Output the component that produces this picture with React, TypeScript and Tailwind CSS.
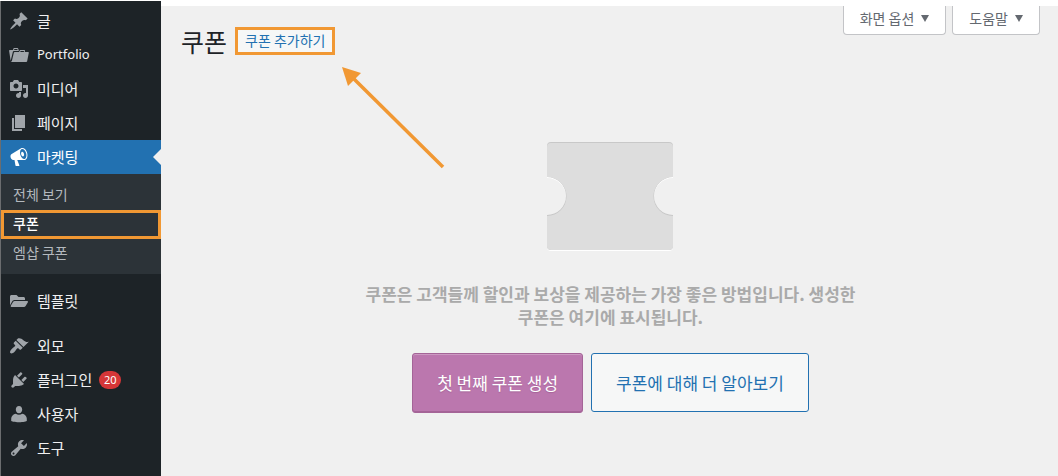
import React from "react";
import { FaFolderOpen } from "react-icons/fa";

const icons = {
  post: "M10.44 3.02l1.82-1.82 6.36 6.35-1.83 1.82c-1.05-.68-2.48-.57-3.41.36l-.75.75c-.92.93-1.04 2.35-.35 3.41l-1.83 1.82-2.41-2.41-2.8 2.79c-.42.42-3.38 2.71-3.8 2.29s1.86-3.39 2.28-3.81l2.79-2.79L4.1 9.36l1.83-1.82c1.05.69 2.48.57 3.4-.36l.75-.75c.93-.92 1.05-2.35.36-3.41z",
  portfolio:
    "M4 5H.78c-.37 0-.74.32-.69.84l1.56 9.99S3.5 8.47 3.86 6.7c.11-.53.61-.7.98-.7H10s-.7-2.08-.77-2.31C9.11 3.25 8.89 3 8.45 3H5.14c-.36 0-.7.23-.8.64C4.25 4.04 4 5 4 5zm4.88 0h-4s.42-1 .87-1h2.13c.48 0 1 1 1 1zM2.67 16.25c-.31.47-.76.75-1.26.75h15.73c.54 0 .92-.31 1.03-.83.44-2.19 1.68-8.44 1.68-8.44.07-.5-.3-.73-.62-.73H16V5.53c0-.16-.26-.53-.66-.53h-3.76c-.52 0-.87.58-.87.58L10 7H5.59c-.32 0-.63.19-.69.5 0 0-1.59 6.7-1.72 7.33-.07.37-.22.99-.51 1.42zM15.38 7H11s.58-1 1.13-1h2.29c.71 0 .96 1 .96 1z",
  media:
    "M13 11V4c0-.55-.45-1-1-1h-1.67L9 1H5L3.67 3H2c-.55 0-1 .45-1 1v7c0 .55.45 1 1 1h10c.55 0 1-.45 1-1zM7 4.5c1.38 0 2.5 1.12 2.5 2.5S8.38 9.5 7 9.5 4.5 8.38 4.5 7 5.62 4.5 7 4.5zM14 6h5v10.5c0 1.38-1.12 2.5-2.5 2.5S14 17.88 14 16.5s1.12-2.5 2.5-2.5c.17 0 .34.02.5.05V9h-3V6zm-4 8.05V13h2v3.5c0 1.38-1.12 2.5-2.5 2.5S7 17.88 7 16.5 8.12 14 9.5 14c.17 0 .34.02.5.05z",
  page: "M6 15V2h10v13H6zm-1 1h8v2H3V5h2v11z",
  megaphone:
    "M18.15 5.94c.46 1.62.38 3.22-.02 4.48-.42 1.28-1.26 2.18-2.3 2.48-.16.06-.26.06-.4.06-.06.02-.12.02-.18.02-.06.02-.14.02-.22.02h-6.8l2.22 5.5c.02.14-.06.26-.14.34-.08.1-.24.16-.34.16H6.95c-.1 0-.26-.06-.34-.16-.08-.08-.16-.2-.14-.34l-1-5.5H4.25l-.02-.02c-.5.06-1.08-.18-1.54-.62s-.88-1.08-1.06-1.88c-.24-.8-.2-1.56-.02-2.2.18-.62.58-1.08 1.06-1.3l.02-.02 9-5.4c.1-.06.18-.1.24-.16.06-.04.14-.08.24-.12.16-.08.28-.12.5-.18 1.04-.3 2.24.1 3.22.98s1.84 2.24 2.26 3.86zm-2.58 5.98h-.02c.4-.1.74-.34 1.04-.7.58-.7.86-1.76.86-3.04 0-.64-.1-1.3-.28-1.98-.34-1.36-1.02-2.5-1.78-3.24s-1.68-1.1-2.46-.88c-.82.22-1.4.96-1.7 2-.32 1.04-.28 2.36.06 3.72.38 1.36 1 2.5 1.8 3.24.78.74 1.62 1.1 2.48.88zm-2.54-7.08c.22-.04.42-.02.62.04.38.16.76.48 1.02 1s.42 1.2.42 1.78c0 .3-.04.56-.12.8-.18.48-.44.84-.86.94-.34.1-.8-.06-1.14-.4s-.64-.86-.78-1.5c-.18-.62-.12-1.24.02-1.72s.48-.84.82-.94z",
  appearance:
    "M14.48 11.06L7.41 3.99l1.5-1.5c.5-.56 2.3-.47 3.51.32 1.21.8 1.43 1.28 2.91 2.1 1.18.64 2.45 1.26 4.45.85zm-.71.71L6.7 4.7 4.93 6.47c-.39.39-.39 1.02 0 1.41l1.06 1.06c.39.39.39 1.03 0 1.42-.6.6-1.43 1.11-2.21 1.69-.35.26-.7.53-1.01.84C1.43 14.23.4 16.08 1.4 17.07c.99 1 2.84-.03 4.18-1.36.31-.31.58-.66.85-1.02.57-.78 1.08-1.61 1.69-2.21.39-.39 1.02-.39 1.41 0l1.06 1.06c.39.39 1.02.39 1.41 0z",
  plugins:
    "M13.11 4.36L9.87 7.6 8 5.73l3.24-3.24c.35-.34 1.05-.2 1.56.32.52.51.66 1.21.31 1.55zm-8 1.77l.91-1.12 9.01 9.01-1.19.84c-.71.71-2.63 1.16-3.82 1.16H6.14L4.9 17.26c-.59.59-1.54.59-2.12 0-.59-.58-.59-1.53 0-2.12l1.24-1.24v-3.88c0-1.13.4-3.19 1.09-3.89zm7.26 3.97l3.24-3.24c.34-.35 1.04-.21 1.55.31.52.51.66 1.21.31 1.55l-3.24 3.25z",
  users:
    "M10 9.25c-2.27 0-3.2-1.9-3.2-3.7C6.8 3.4 8 1.9 10 1.9s3.2 1.5 3.2 3.65c0 1.8-.93 3.7-3.2 3.7zM6.8 9.7c1 .7 2 1.1 3.200 1.100s2.200-.4 3.200-1.100c2.600.3 4.600 2.600 4.600 4.900v2.300s-3.600 1.300-7.800 1.300-7.800-1.300-7.800-1.300v-2.300c0-2.300 2-4.600 4.600-4.900z",
  tools:
    "M16.68 9.77c-1.34 1.34-3.3 1.67-4.95.99l-5.41 6.52c-.99.99-2.59.99-3.58 0s-.99-2.59 0-3.57l6.52-5.42c-.68-1.65-.35-3.61.99-4.95 1.28-1.28 3.12-1.62 4.72-1.06l-2.89 2.89 2.82 2.82 2.86-2.87c.53 1.58.18 3.39-1.08 4.65zM3.81 16.21c.4.39 1.04.39 1.43 0 .4-.4.4-1.04 0-1.43-.39-.4-1.03-.4-1.43 0-.39.39-.39 1.03 0 1.43z",
};

const submenu = ["전체 보기", "쿠폰", "엠샵 쿠폰"];

function Dashicon({ name }: { name: keyof typeof icons }) {
  return (
    <svg viewBox="0 0 20 20" className="size-5 shrink-0" fill="currentColor" aria-hidden="true">
      <path d={icons[name]} />
    </svg>
  );
}

function MenuItem({
  icon,
  label,
  count,
}: {
  icon: React.ReactNode;
  label: React.ReactNode;
  count?: number;
}) {
  return (
    <li>
      <a href="#" className="flex h-[34px] items-center gap-2 pl-2 text-[15px] text-[#f0f0f1]">
        <span className="flex w-5 justify-center text-[#a0a5aa]">{icon}</span>
        <span className="flex items-center gap-[7px]">
          {label}
          {count && (
            <span className="flex h-[18px] min-w-[22px] items-center justify-center rounded-full bg-[#d63638] font-['Noto_Sans'] text-[11px] text-white">
              {count}
            </span>
          )}
        </span>
      </a>
    </li>
  );
}

function Sidebar() {
  return (
    <nav className="w-[161px] shrink-0 border-l border-[#6b6d6f] bg-[#1d2327] pt-[3px]">
      <ul>
        <MenuItem icon={<Dashicon name="post" />} label="글" />
        <MenuItem
          icon={<Dashicon name="portfolio" />}
          label={<span className="font-['Noto_Sans'] text-[13px]">Portfolio</span>}
        />
        <MenuItem icon={<Dashicon name="media" />} label="미디어" />
        <MenuItem icon={<Dashicon name="page" />} label="페이지" />
        <li>
          <a
            href="#"
            className="relative flex h-[34px] items-center gap-2 bg-[#2271b1] pl-2 text-[15px] text-white"
          >
            <Dashicon name="megaphone" />
            <span>마켓팅</span>
            {/* Current item notch */}
            <span className="absolute top-[9px] right-0 border-8 border-l-0 border-transparent border-r-[#f0f0f0]" />
          </a>
          <ul className="bg-[#2c3338] pt-[7px] pb-[6px] text-[14px] text-[#b4b9be]">
            {submenu.map((label) => (
              <li key={label}>
                {label === "쿠폰" ? (
                  <a
                    href="#"
                    className="flex h-[29px] items-center border-3 border-[#f19833] pb-[3px] pl-[9px] font-medium text-white"
                  >
                    {label}
                  </a>
                ) : (
                  <a href="#" className="flex h-[29px] items-center pb-[3px] pl-3">
                    {label}
                  </a>
                )}
              </li>
            ))}
          </ul>
        </li>
        <li className="h-[10px]" />
        <MenuItem icon={<FaFolderOpen className="size-[18px]" />} label="템플릿" />
        <li className="h-[11px]" />
        <MenuItem icon={<Dashicon name="appearance" />} label="외모" />
        <MenuItem icon={<Dashicon name="plugins" />} label="플러그인" count={20} />
        <MenuItem icon={<Dashicon name="users" />} label="사용자" />
        <MenuItem icon={<Dashicon name="tools" />} label="도구" />
      </ul>
    </nav>
  );
}

function ScreenTab({ label }: { label: string }) {
  return (
    <button className="flex h-[29px] items-center gap-[7px] rounded-b border border-t-0 border-[#c3c4c7] bg-white px-4 pb-[3px] text-[14px] text-[#646970]">
      {label}
      <svg viewBox="0 0 8 7" className="h-[7px] w-2" fill="currentColor" aria-hidden="true">
        <path d="M0 0h8L4 7z" />
      </svg>
    </button>
  );
}

function Ticket() {
  const shape =
    "M4 0H122a4 4 0 0 1 4 4V35a19 19 0 0 0 0 38V104a4 4 0 0 1-4 4H4a4 4 0 0 1-4-4V73a19 19 0 0 0 0-38V4a4 4 0 0 1 4-4z";
  return (
    <svg viewBox="0 0 126 110" className="mr-[2px] h-[110px] w-[126px]" aria-hidden="true">
      <path d={shape} fill="#fff" transform="translate(0 1)" />
      <path d={shape} fill="#c8c8c8" />
      {/* Face sits a pixel lower so the top edges read as inset */}
      <path
        d="M4 1H122a4 4 0 0 1 4 4V35a19 19 0 0 0 0 39V104a4 4 0 0 1-4 4H4a4 4 0 0 1-4-4V74a19 19 0 0 0 0-39V5a4 4 0 0 1 4-4z"
        fill="#ddd"
      />
    </svg>
  );
}

export default function App() {
  return (
    <div className="flex min-h-screen bg-white pt-px font-['Noto_Sans_CJK_KR','Noto_Sans',sans-serif]">
      <Sidebar />
      <main className="relative mt-[5px] flex-1 bg-[#f0f0f0] pr-[18px] pl-5">
        <div className="flex items-start justify-between">
          <div className="flex items-center gap-2 pt-[19px]">
            <h1 className="text-[25px] leading-8 text-[#1d2327]">쿠폰</h1>
            <a
              href="#"
              className="flex h-7 items-center border-3 border-[#f19833] bg-[#f6f7f7] px-[7px] pb-px text-[14px] text-[#2271b1]"
            >
              쿠폰 추가하기
            </a>
          </div>
          <div className="flex gap-[6px]">
            <ScreenTab label="화면 옵션" />
            <ScreenTab label="도움말" />
          </div>
        </div>

        {/* Arrow pointing at the add button */}
        <svg
          viewBox="0 0 104 104"
          className="absolute top-[60px] left-[180px] size-[104px]"
          aria-hidden="true"
        >
          <path d="M12 12L102 101" stroke="#f19833" strokeWidth="3.5" />
          <path d="M1 1L20 7L7 20z" fill="#f19833" />
        </svg>

        <section className="flex flex-col items-center pt-[85px] pb-16">
          <Ticket />
          <h2 className="mt-[30px] max-w-[500px] text-center text-[17px] leading-[23px] font-bold text-[#aaa]">
            쿠폰은 고객들께 할인과 보상을 제공하는 가장 좋은 방법입니다. 생성한 쿠폰은 여기에
            표시됩니다.
          </h2>
          <div className="mt-[25px] flex gap-2 text-[17px]">
            <a
              href="#"
              className="flex h-[60px] items-center rounded-[3px] border border-[#a46497] bg-[#bb77ae] px-6 text-white shadow-[inset_0_1px_0_rgba(255,255,255,0.25),inset_0_-1px_0_#a46497] text-shadow-[0_1px_1px_#a46497]"
            >
              첫 번째 쿠폰 생성
            </a>
            <a
              href="#"
              className="flex h-[59px] items-center rounded-[3px] border border-[#2271b1] bg-[#f6f7f7] px-6 text-[#2271b1]"
            >
              쿠폰에 대해 더 알아보기
            </a>
          </div>
        </section>
      </main>
    </div>
  );
}
